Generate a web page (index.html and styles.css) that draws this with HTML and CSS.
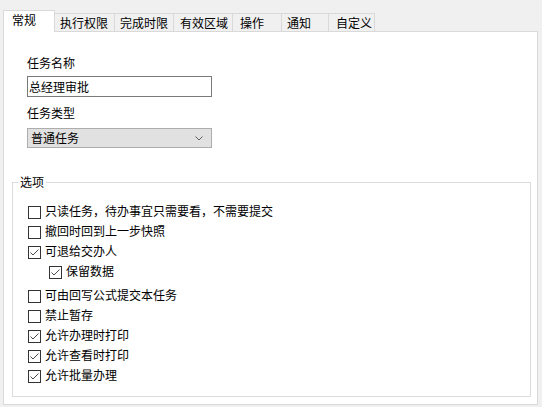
FILE: index.html
```html
<!DOCTYPE html>
<html lang="zh-CN">
<head>
<meta charset="utf-8">
<title>任务属性</title>
<link rel="stylesheet" href="styles.css">
</head>
<body>
<div class="window">
  <div class="tabs">
    <div class="tab tab-active">常规</div>
    <div class="tab t2">执行权限</div>
    <div class="tab t3">完成时限</div>
    <div class="tab t4">有效区域</div>
    <div class="tab t5">操作</div>
    <div class="tab t6">通知</div>
    <div class="tab t7">自定义</div>
  </div>
  <div class="panel">
    <div class="field-label">任务名称</div>
    <div class="textbox">总经理审批</div>
    <div class="field-label second">任务类型</div>
    <div class="select">
      <span>普通任务</span>
      <svg class="chevron" width="8" height="5" viewBox="0 0 8 5"><polyline points="0.5,0.5 4,4 7.5,0.5" fill="none" stroke="#606060" stroke-width="1"/></svg>
    </div>
    <fieldset class="group">
      <legend>选项</legend>
      <div class="options">
        <div class="option"><span class="box"></span><span class="opt-text">只读任务，待办事宜只需要看，不需要提交</span></div>
        <div class="option"><span class="box"></span><span class="opt-text">撤回时回到上一步快照</span></div>
        <div class="option"><span class="box"><svg width="11" height="11" viewBox="0 0 11 11"><polyline points="1.5,5.5 4,8 9.5,2.5" fill="none" stroke="#4a4a4a" stroke-width="1"/></svg></span><span class="opt-text">可退给交办人</span></div>
        <div class="option sub"><span class="box"><svg width="11" height="11" viewBox="0 0 11 11"><polyline points="1.5,5.5 4,8 9.5,2.5" fill="none" stroke="#4a4a4a" stroke-width="1"/></svg></span><span class="opt-text">保留数据</span></div>
        <div class="option after-sub"><span class="box"></span><span class="opt-text">可由回写公式提交本任务</span></div>
        <div class="option"><span class="box"></span><span class="opt-text">禁止暂存</span></div>
        <div class="option"><span class="box"><svg width="11" height="11" viewBox="0 0 11 11"><polyline points="1.5,5.5 4,8 9.5,2.5" fill="none" stroke="#4a4a4a" stroke-width="1"/></svg></span><span class="opt-text">允许办理时打印</span></div>
        <div class="option"><span class="box"><svg width="11" height="11" viewBox="0 0 11 11"><polyline points="1.5,5.5 4,8 9.5,2.5" fill="none" stroke="#4a4a4a" stroke-width="1"/></svg></span><span class="opt-text">允许查看时打印</span></div>
        <div class="option"><span class="box"><svg width="11" height="11" viewBox="0 0 11 11"><polyline points="1.5,5.5 4,8 9.5,2.5" fill="none" stroke="#4a4a4a" stroke-width="1"/></svg></span><span class="opt-text">允许批量办理</span></div>
      </div>
    </fieldset>
  </div>
</div>
</body>
</html>
```
FILE: styles.css
```css
* { box-sizing: border-box; }
html, body {
  margin: 0;
  padding: 0;
  background: #f0f0f0;
}
body {
  font-family: "Noto Sans CJK SC", "Noto Sans", sans-serif;
  font-size: 12px;
  color: #000;
  width: 542px;
  height: 407px;
  overflow: hidden;
}
.window {
  padding: 10px 4px 0 3px;
}
.tabs {
  display: flex;
  align-items: flex-end;
  height: 21px;
  position: relative;
  z-index: 1;
}
.tab {
  height: 18px;
  border: 1px solid #d9d9d9;
  border-bottom: none;
  background: #f0f0f0;
  line-height: 16px;
  padding: 1px 0 0 5px;
  margin-left: -1px;
  white-space: nowrap;
}
.tab-active {
  position: relative;
  z-index: 2;
  height: 22px;
  width: 52px;
  margin-left: 0;
  margin-bottom: -1px;
  background: #fff;
  padding-left: 8px;
}
.t2 { width: 61px; }
.t3 { width: 60px; }
.t4 { width: 60px; padding-left: 6px; }
.t5 { width: 50px; padding-left: 7px; }
.t6 { width: 48px; }
.t7 { width: 47px; padding-left: 7px; }
.panel {
  background: #fff;
  border: 1px solid #d9d9d9;
  padding: 23px 0 7px 23px;
}
.field-label {
  line-height: 16px;
}
.field-label.second {
  margin-top: 8px;
}
.textbox {
  margin-top: 5px;
  width: 185px;
  height: 21px;
  border: 1px solid #7a7a7a;
  line-height: 19px;
  padding-left: 1px;
  background: #fff;
}
.select {
  margin-top: 7px;
  width: 185px;
  height: 20px;
  border: 1px solid #adadad;
  background: #e1e1e1;
  line-height: 18px;
  padding: 0 8px 0 3px;
  display: flex;
  align-items: center;
  justify-content: space-between;
}
.chevron {
  display: block;
}
.group {
  margin: 26px 6px 0 -15px;
  border: 1px solid #dcdcdc;
  padding: 0 0 9px 5px;
  min-width: 0;
}
.group legend {
  padding: 0 2px;
  line-height: 16px;
}
.options {
  padding-top: 13px;
}
.option {
  display: flex;
  align-items: flex-start;
  height: 20px;
  margin-left: 10px;
}
.option.sub {
  margin-left: 31px;
}
.option.after-sub {
  margin-top: 4px;
}
.box {
  width: 13px;
  height: 13px;
  margin-top: 3px;
  margin-right: 4px;
  border: 1px solid #333;
  background: #fff;
  flex: none;
}
.box svg {
  display: block;
}
.opt-text {
  line-height: 16px;
  white-space: nowrap;
}
```
